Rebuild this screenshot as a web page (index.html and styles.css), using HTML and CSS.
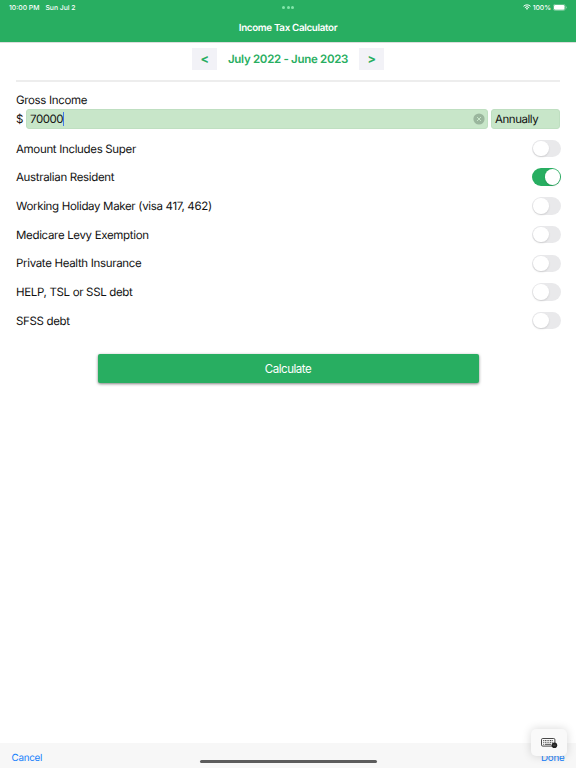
FILE: index.html
```html
<!DOCTYPE html>
<html lang="en">
<head>
    <meta charset="UTF-8">
    <meta name="viewport" content="width=device-width, initial-scale=1.0">
    <title>Income Tax Calculator</title>
    <link rel="stylesheet" href="styles.css">
</head>
<body>
    <header class="header">
        <div class="status-bar">
            <div class="status-left"><span>10:00 PM</span><span>Sun Jul 2</span></div>
            <div class="dots"><i></i><i></i><i></i></div>
            <div class="status-right">
                <svg class="wifi" viewBox="0 0 16 12" fill="none" stroke="#fff" stroke-width="2">
                    <path d="M1 4.6a10 10 0 0 1 14 0"/>
                    <path d="M3.7 7.3a6.1 6.1 0 0 1 8.6 0"/>
                    <path d="M8 11.7 5.7 9.3a3.3 3.3 0 0 1 4.6 0z" fill="#fff" stroke="none"/>
                </svg>
                <span>100%</span>
                <svg class="battery" viewBox="0 0 28 14">
                    <rect x="0.6" y="0.6" width="23.8" height="12.4" rx="3.6" fill="none" stroke="#fff" stroke-opacity="0.5" stroke-width="1.2"/>
                    <rect x="2" y="2" width="21" height="9.6" rx="2.4" fill="#fff"/>
                    <path d="M26 4.6v4.6c1-.4 1.6-1.3 1.6-2.3S27 5 26 4.6z" fill="#fff" fill-opacity="0.5"/>
                </svg>
            </div>
        </div>
        <h1>Income Tax Calculator</h1>
    </header>

    <main class="container">
        <div class="period">
            <button class="period-btn">&lt;</button>
            <span class="period-text">July 2022 - June 2023</span>
            <button class="period-btn">&gt;</button>
        </div>

        <div class="label">Gross Income</div>
        <div class="income-row">
            <span class="currency">$</span>
            <div class="input">
                <span class="value">70000</span>
                <svg class="clear" viewBox="0 0 12 12">
                    <circle cx="6" cy="6" r="5.6" fill="#9ab69d"/>
                    <path d="M4 4l4 4M8 4l-4 4" stroke="#c8e6c9" stroke-width="1"/>
                </svg>
            </div>
            <div class="select">Annually</div>
        </div>

        <div class="options">
            <div class="option"><span>Amount Includes Super</span><span class="toggle"></span></div>
            <div class="option"><span>Australian Resident</span><span class="toggle on"></span></div>
            <div class="option"><span>Working Holiday Maker (visa 417, 462)</span><span class="toggle"></span></div>
            <div class="option"><span>Medicare Levy Exemption</span><span class="toggle"></span></div>
            <div class="option"><span>Private Health Insurance</span><span class="toggle"></span></div>
            <div class="option"><span>HELP, TSL or SSL debt</span><span class="toggle"></span></div>
            <div class="option"><span>SFSS debt</span><span class="toggle"></span></div>
        </div>

        <button class="calculate">Calculate</button>
    </main>

    <footer class="footer">
        <span>Cancel</span>
        <span>Done</span>
        <div class="home-bar"></div>
        <div class="keyboard">
            <svg viewBox="0 0 17 12">
                <rect x="0.5" y="1.5" width="13.4" height="7.6" rx="1.2" fill="none" stroke="#333" stroke-width="0.9"/>
                <path d="M2.2 3.5h10M2.2 5.3h10" stroke="#333" stroke-width="0.9" stroke-dasharray="1 0.7"/>
                <path d="M2.2 7.3h1M4 7.3h6" stroke="#333" stroke-width="0.9"/>
                <circle cx="13.4" cy="8.2" r="2.8" fill="#222"/>
                <path d="M12 8.2h2.8" stroke="#666" stroke-width="0.6"/>
            </svg>
        </div>
    </footer>
</body>
</html>
```

FILE: styles.css
```css
* {
    box-sizing: border-box;
}
body {
    margin: 0;
    height: 768px;
    display: flex;
    flex-direction: column;
    overflow: hidden;
    background-color: #fff;
    color: #111;
    font-family: Inter, "Liberation Sans", sans-serif;
    font-size: 11.5px;
    letter-spacing: -0.33px;
    text-rendering: geometricPrecision;
}
button {
    border: none;
    padding: 0;
    font-family: inherit;
    letter-spacing: inherit;
}
.header {
    height: 42px;
    background-color: #28ae61;
    color: #fff;
    box-shadow: 0 0.5px 0.5px #ddd;
}
.status-bar {
    display: grid;
    grid-template-columns: 1fr auto 1fr;
    align-items: center;
    height: 14px;
    padding: 0 9px;
    font-size: 6.8px;
    font-weight: 500;
    letter-spacing: 0;
}
.status-left {
    display: flex;
    gap: 6px;
}
.dots {
    display: flex;
    gap: 1.5px;
}
.dots i {
    width: 3px;
    height: 3px;
    border-radius: 50%;
    background-color: #83e5aa;
}
.status-right {
    display: flex;
    align-items: center;
    justify-content: flex-end;
    gap: 2px;
}
.wifi {
    width: 8px;
    height: 6px;
}
.battery {
    width: 14px;
    height: 7px;
}
h1 {
    margin: 0;
    padding-top: 7px;
    font-size: 9.8px;
    font-weight: 600;
    line-height: 16px;
    text-align: center;
}
.container {
    flex: 1;
    padding: 0 16px;
}
.period {
    display: flex;
    justify-content: center;
    gap: 11px;
    height: 40px;
    padding-top: 6px;
    border-bottom: 2px solid #ededed;
    color: #28ae61;
    font-size: 11.5px;
    font-weight: 600;
    line-height: 22px;
}
.period-text {
    width: 120px;
    text-align: center;
    white-space: nowrap;
    letter-spacing: -0.3px;
}
.period-btn {
    width: 25px;
    height: 22px;
    background-color: #f2f2f7;
    color: #28ae61;
    font-size: 12.5px;
    font-weight: 700;
    line-height: 22px;
}
.label {
    margin-top: 10px;
    line-height: 16px;
}
.income-row {
    display: flex;
    align-items: center;
    height: 20px;
    margin-top: 1px;
}
.currency {
    width: 10px;
}
.input,
.select {
    display: flex;
    align-items: center;
    height: 20px;
    border: 1px solid #bfdfc1;
    border-radius: 3px;
    background-color: #c8e6c9;
}
.input {
    flex: 1;
    justify-content: space-between;
    margin-right: 3px;
    padding: 0 2px 0 3px;
}
.value {
    border-right: 1px solid #4478e8;
    letter-spacing: -0.45px;
    line-height: 14px;
}
.clear {
    width: 12px;
    height: 12px;
}
.select {
    width: 69px;
    padding-left: 3px;
    letter-spacing: -0.45px;
}
.options {
    margin: 5.2px -1px 0 0;
}
.option {
    display: flex;
    align-items: center;
    justify-content: space-between;
    height: 28.7px;
}
.toggle {
    width: 29px;
    height: 17.5px;
    padding: 1px;
    border-radius: 9px;
    background-color: #e9e9eb;
}
.toggle::before {
    content: "";
    display: block;
    width: 15.5px;
    height: 15.5px;
    border-radius: 50%;
    background-color: #fff;
    box-shadow: 0 1px 2px rgba(0, 0, 0, 0.12);
}
.toggle.on {
    background-color: #28ae61;
}
.toggle.on::before {
    margin-left: auto;
}
.calculate {
    display: block;
    width: 381px;
    height: 28.5px;
    margin: 19px auto 0;
    border-radius: 2px;
    background-color: #28ae61;
    box-shadow: 0 1px 3px rgba(0, 0, 0, 0.5);
    color: #fff;
    font-size: 11.5px;
    letter-spacing: -0.45px;
    line-height: 28.5px;
    padding-top: 0.5px;
}
.footer {
    position: relative;
    display: flex;
    justify-content: space-between;
    height: 25px;
    padding: 0 11.5px;
    background-color: #f7f7f7;
    color: #147efb;
    font-size: 9.8px;
    letter-spacing: -0.25px;
    line-height: 31px;
}
.home-bar {
    position: absolute;
    left: 199.5px;
    bottom: 5px;
    width: 177px;
    height: 3px;
    border-radius: 2px;
    background-color: #5c5c5c;
}
.keyboard {
    position: absolute;
    right: 9.5px;
    bottom: 12px;
    display: flex;
    align-items: center;
    justify-content: center;
    width: 36px;
    height: 27px;
    border-radius: 5px;
    background-color: #f9f9f9;
    box-shadow: 0 0 10px rgba(0, 0, 0, 0.16);
}
.keyboard svg {
    width: 17px;
    height: 12px;
    margin-left: 2px;
}
```
